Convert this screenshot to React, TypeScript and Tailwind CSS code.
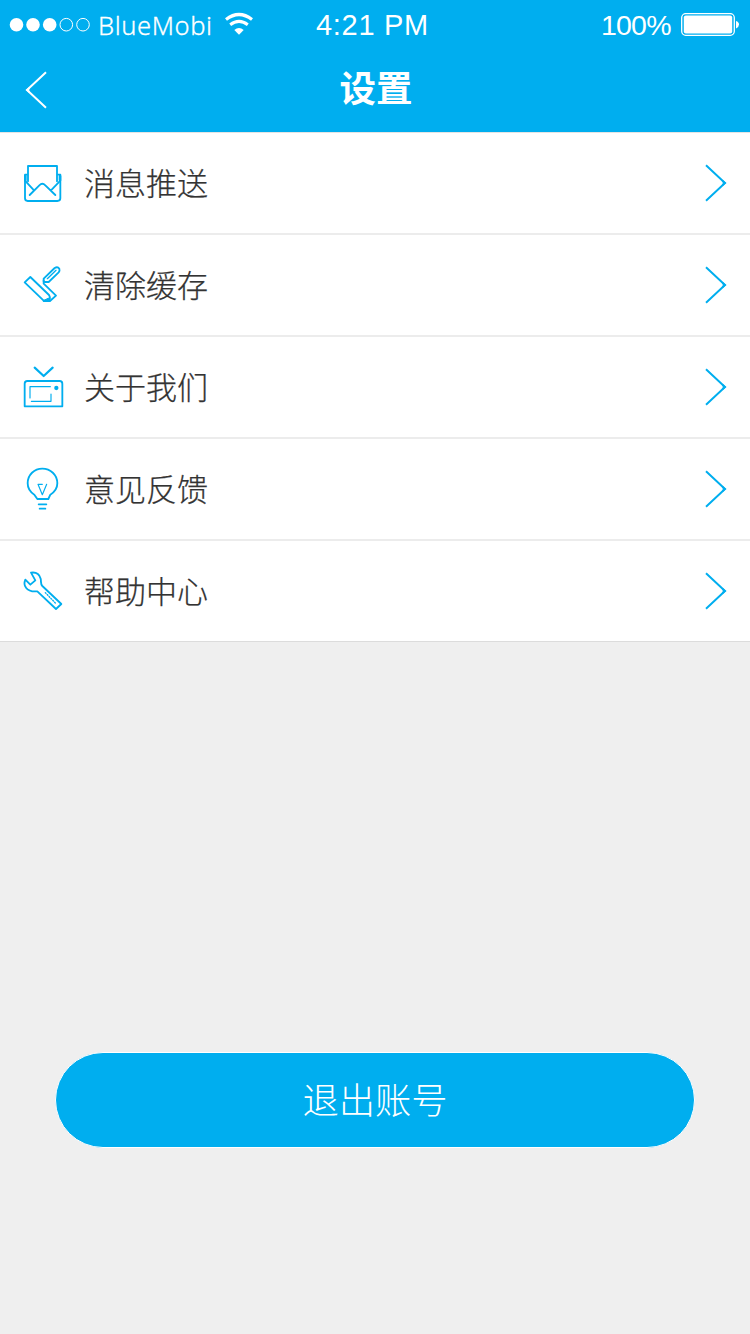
import type { ReactNode } from "react";

const cjk = "font-['Noto_Sans_CJK_SC',sans-serif]";

function RowIcon({ top, children }: { top: number; children: ReactNode }) {
  return (
    <svg width="70" height="101" viewBox="0 0 210 303" fill="none" stroke="#00aeef" strokeWidth="5.5" strokeLinejoin="round" strokeLinecap="round" className="shrink-0">
      <g transform={`translate(0 ${top})`}>{children}</g>
    </svg>
  );
}

const rows: { label: string; icon: ReactNode }[] = [
  {
    label: "消息推送",
    icon: (
      <RowIcon top={54}>
        <path d="M54 94V48H141V94" />
        <path d="M51 74H45V145Q45 153 53 153H142Q151 153 151 145V74H144" />
        <path d="M46 78V90M150 78V90" strokeWidth="8" />
        <path d="M45 92L72 121M151 92L123 121M59 135L88 106Q97 97 106 106L136 135" />
      </RowIcon>
    ),
  },
  {
    label: "清除缓存",
    icon: (
      <RowIcon top={63}>
        <path d="M44 82L61 66L117 120Q123 130 116 137H101Z" />
        <path d="M101 138H120L138 122L101 86V76" />
        <path d="M104 135L116 129L118 138Z" fill="#00aeef" strokeWidth="3" />
        <path d="M101 79V71L134 39Q143 34 148 41Q150 47 146 52L116 81H104Z" />
        <path d="M112 71L138 46" strokeWidth="4" />
      </RowIcon>
    ),
  },
  {
    label: "关于我们",
    icon: (
      <RowIcon top={57}>
        <path d="M74 38L101 63L128 38" strokeWidth="6.5" />
        <path d="M49 154H44V86Q44 78 52 78H149Q157 78 157 86V154H51" />
        <path d="M121 95H60V129M64 139H123V117" strokeWidth="3.5" />
        <circle cx="139" cy="99" r="6.5" fill="#00aeef" stroke="none" />
      </RowIcon>
    ),
  },
  {
    label: "意见反馈",
    icon: (
      <RowIcon top={60}>
        <path d="M73 110C60 102 53 90 53 76C53 50 73 32 97 32S142 50 142 76C142 90 134 102 121 110L115 123H82L73 110Z" />
        <path d="M97 79H84L97 110L110 79" strokeWidth="3.5" />
        <path d="M86 139H109M89 152H106" strokeWidth="5.5" />
      </RowIcon>
    ),
  },
  {
    label: "帮助中心",
    icon: (
      <RowIcon top={60}>
        <path d="M63 38C77 36 88 42 92 56C94 65 91 72 97 78L154 132L138 147L82 94C70 95 56 94 48 83C43 77 43 66 46 59L61 74L76 61Z" />
        <path d="M106 98L136 129" strokeWidth="4" strokeDasharray="3 5" />
      </RowIcon>
    ),
  },
];

function StatusBar() {
  return (
    <div className="flex h-[50px] items-center text-white">
      <svg width="90" height="50" className="shrink-0">
        <circle cx="16.5" cy="24.7" r="6.8" fill="white" />
        <circle cx="33" cy="24.7" r="6.8" fill="white" />
        <circle cx="49.7" cy="24.7" r="6.8" fill="white" />
        <circle cx="66.3" cy="24.7" r="6.3" fill="none" stroke="white" strokeWidth="1" />
        <circle cx="83" cy="24.7" r="6.3" fill="none" stroke="white" strokeWidth="1" />
      </svg>
      <span className="ml-[8px] w-[127px] whitespace-nowrap font-['Noto_Sans',sans-serif] text-[25.5px] leading-[50px] font-light tracking-[0.6px] [-webkit-text-stroke:0.3px_white]">BlueMobi</span>
      <svg width="28" height="50" viewBox="0 0 28 50" fill="none" stroke="white" className="shrink-0">
        <path d="M1 19.5Q14 9.5 27 19.5" strokeWidth="3.2" />
        <path d="M5.2 24.8Q14 18 22.8 24.8" strokeWidth="3" />
        <path d="M9.3 30Q14 26 18.7 30L14 34.7Z" fill="white" stroke="none" />
      </svg>
      <span className="ml-[63px] w-[285px] whitespace-nowrap font-['Liberation_Sans',sans-serif] text-[29px] leading-[50px] tracking-[0.7px]">4:21 PM</span>
      <span className="w-[80px] whitespace-nowrap font-['Liberation_Sans',sans-serif] text-[28.5px] leading-[50px] tracking-[-0.8px]">100%</span>
      <svg width="60" height="50" className="shrink-0">
        <rect x="0.7" y="13.7" width="52.6" height="21.6" rx="4" fill="none" stroke="white" strokeWidth="1.3" />
        <rect x="2.8" y="15.6" width="48.4" height="17.8" rx="2" fill="white" />
        <path d="M55 21Q58 22 58 24.5T55 28.5Z" fill="white" />
      </svg>
    </div>
  );
}

export default function App() {
  return (
    <main className={`flex min-h-[1334px] w-[750px] flex-col overflow-hidden bg-[#efefef] ${cjk}`}>
      <header className="h-[132px] bg-[#00aeef]">
        <StatusBar />
        <div className="flex h-[82px] items-start">
          <button aria-label="返回" className="w-[72px] pt-[20px] pl-[24px]">
            <svg width="24" height="40" fill="none" stroke="white" strokeWidth="2">
              <path d="M22 2.3L3 20L22 37.7" />
              <path d="M5.5 18L3.2 20L5.5 22" />
            </svg>
          </button>
          <h1 className="w-[608px] pt-[11px] text-center text-[36.5px] leading-[52px] font-bold text-white">设置</h1>
        </div>
      </header>
      <ul className="border-t border-[#e4e4e4] bg-white">
        {rows.map((row) => (
          <li key={row.label} className="flex h-[102px] items-start border-b-2 border-[#ececec] pl-[10px] last:h-[101px] last:border-b last:border-[#dcdcdc]">
            <div className="-mt-px h-[101px] shrink-0">{row.icon}</div>
            <span className="ml-[4px] pt-[26px] text-[31px] leading-[46px] font-light text-[#333333] [-webkit-text-stroke:0.25px_#333333]">{row.label}</span>
            <svg width="24" height="40" fill="none" stroke="#00aeef" strokeWidth="2" className="mt-[30px] mr-[22px] ml-auto">
              <path d="M2 2.3L21 20L2 37.7" />
              <path d="M18.5 18L20.8 20L18.5 22" />
            </svg>
          </li>
        ))}
      </ul>
      <button className="mx-[55px] mt-[410px] h-[96px] rounded-[48px] border border-white bg-[#00aeef] pb-[3px] text-[36.3px] font-light text-white">
        退出账号
      </button>
    </main>
  );
}
